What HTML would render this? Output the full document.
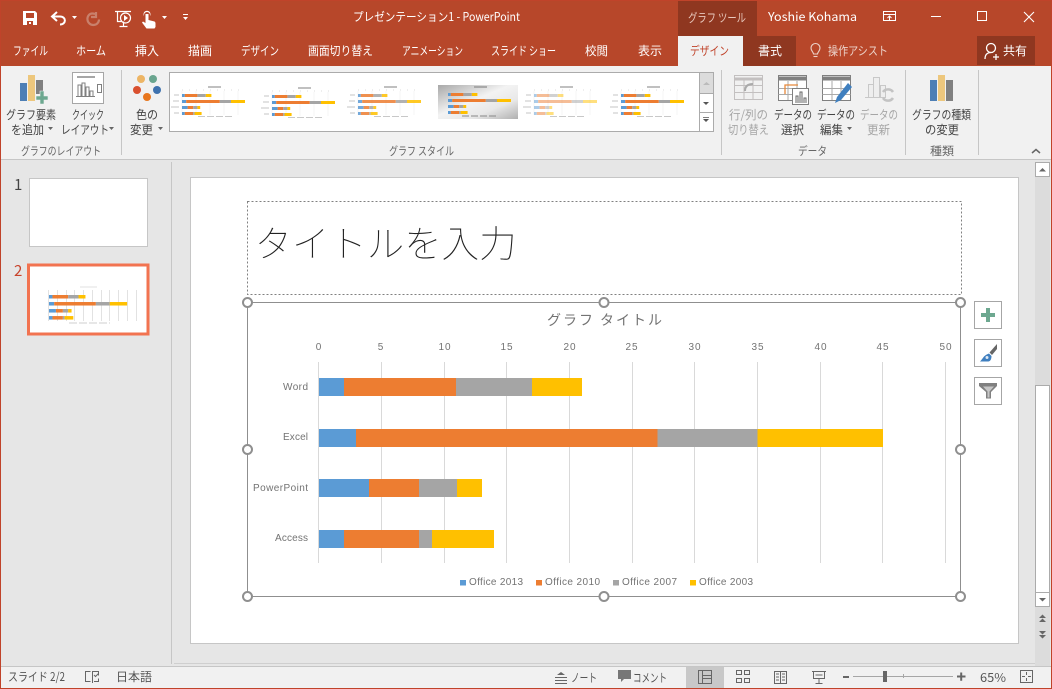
<!DOCTYPE html>
<html lang="ja"><head><meta charset="utf-8"><title>PowerPoint</title>
<style>
html,body{margin:0;padding:0;width:1052px;height:689px;overflow:hidden;background:#e6e6e6}
svg{display:block;position:absolute;left:0;top:0}
text{font-family:"Liberation Sans","Noto Sans CJK JP",sans-serif;white-space:pre}
.j{font-family:"Noto Sans CJK JP","Liberation Sans",sans-serif;font-size:12px}
.w{fill:#fff}.k{fill:#444}.d{fill:#a6a6a6}.g{fill:#666;font-size:11.5px}
.a{font-family:"Liberation Sans",sans-serif;font-size:10px;fill:#737373}
</style></head><body>
<svg width="1052" height="689" viewBox="0 0 1052 689" xmlns="http://www.w3.org/2000/svg">
<defs>
<g id="bars">
<rect x="0" y="0" width="2.8" height="3" fill="#5b9bd5"/><rect x="2.8" y="0" width="12.6" height="3" fill="#ed7d31"/><rect x="15.4" y="0" width="8.4" height="3" fill="#a5a5a5"/><rect x="23.8" y="0" width="5.6" height="3" fill="#ffc000"/>
<rect x="0" y="6" width="4.2" height="3" fill="#5b9bd5"/><rect x="4.2" y="6" width="33.6" height="3" fill="#ed7d31"/><rect x="37.8" y="6" width="11.2" height="3" fill="#a5a5a5"/><rect x="49" y="6" width="14" height="3" fill="#ffc000"/>
<rect x="0" y="12" width="5.6" height="3" fill="#5b9bd5"/><rect x="5.6" y="12" width="5.6" height="3" fill="#ed7d31"/><rect x="11.2" y="12" width="4.2" height="3" fill="#a5a5a5"/><rect x="15.4" y="12" width="2.8" height="3" fill="#ffc000"/>
<rect x="0" y="18" width="2.8" height="3" fill="#5b9bd5"/><rect x="2.8" y="18" width="8.4" height="3" fill="#ed7d31"/><rect x="11.2" y="18" width="1.4" height="3" fill="#a5a5a5"/><rect x="12.6" y="18" width="7" height="3" fill="#ffc000"/>
</g>
<g id="deco">
<path d="M-8 1h5M-9 7h6M-11 13h8M-8 19h5" stroke="#c4c4c4" stroke-width="1"/>
<path d="M26 -7h13" stroke="#c0c0c0" stroke-width="2"/>
<path d="M0 -4h62" stroke="#ddd" stroke-width="1" stroke-dasharray="1 6"/>
<path d="M16 22.500h34" stroke="#c8c8c8" stroke-width="1" stroke-dasharray="7 2"/>
<path d="M0 -3v24M14 -3v24M28 -3v24M42 -3v24M56 -3v24" stroke="#f4f4f4"/>
</g>
<linearGradient id="gr" x1="0" y1="0" x2="1" y2="1"><stop offset="0" stop-color="#a8a8a8"/><stop offset=".45" stop-color="#f3f3f3"/><stop offset=".7" stop-color="#e8e8e8"/><stop offset="1" stop-color="#b0b0b0"/></linearGradient>
</defs>

<!-- window -->
<rect width="1052" height="689" fill="#e6e6e6"/>
<rect width="1052" height="66" fill="#b7472a"/>
<rect x="0" y="66" width="1052" height="93" fill="#f1f1f1"/>
<rect x="0" y="159" width="1052" height="1" fill="#c6c6c6"/>
<rect x="0" y="667" width="1052" height="21" fill="#f1f1f1"/>
<rect x="0" y="666" width="1052" height="1" fill="#c6c6c6"/>
<rect x="174" y="663" width="861" height="1" fill="#cfcfcf"/>
<rect x="171" y="162" width="1" height="502" fill="#c6c6c6"/>

<!-- tabs -->
<rect x="678" y="1" width="79" height="35" fill="#8f3720"/>
<rect x="678" y="36" width="65" height="30" fill="#f1f1f1"/>
<rect x="743" y="36" width="53" height="30" fill="#8f3720"/>
<rect x="977" y="36" width="58" height="29" fill="#8f3720"/>

<!-- QAT -->
<path d="M23 11h12l2 2v12H23z M26 13v5h8v-5z M27 25h6v-4h-6z" fill="#fff" fill-rule="evenodd"/>
<rect x="29" y="22" width="2" height="2" fill="#fff"/>
<path d="M57 12l-5 4.500 5 4.500M53 16.500h7c6.500 0 6.500 8 0 8" fill="none" stroke="#fff" stroke-width="2"/>
<path d="M96 12v5h-5M95 14c-6-2-8 3-7.500 6 .5 3 3 5 6 5 3.500 0 5.500-3 5.500-5.500" fill="none" stroke="#c9806b" stroke-width="2.200"/>
<g fill="none" stroke="#fff" stroke-width="1.200">
<path d="M115 11.500h16M117.500 12v9.500h4M123.500 21.500v5M119.500 26.500h8"/><circle cx="125.500" cy="18" r="5"/>
</g>
<path d="M124 15l4 3-4 3z" fill="#fff"/>
<path d="M144 16a3.500 3.500 0 1 1 6 0v-1a2.600 2.600 0 1 0-6 0zM145.500 14h3v6l6 1.500c1 .5 1 1.500 1 2.500v3l-1 1.500h-8l-4.500-6 1-1 2.500 1.500z" fill="#fff"/>
<path d="M72 16h5l-2.500 3zM162 16h5l-2.500 3zM183 17h5l-2.500 3z" fill="#fff"/><rect x="183" y="14" width="5" height="1" fill="#fff"/>

<!-- title bar text -->
<text x="353" y="21" class="j w" textLength="167" lengthAdjust="spacingAndGlyphs">プレゼンテーション1 - PowerPoint</text>
<text x="688" y="22" class="j" fill="#e8c8bd" textLength="58" lengthAdjust="spacingAndGlyphs">グラフ ツール</text>
<text x="768" y="21" class="j w" textLength="89" lengthAdjust="spacingAndGlyphs">Yoshie Kohama</text>
<g fill="none" stroke="#fff"><path d="M883.500 11.500h12v9h-12zM883.500 14.500h12M889.500 20v-4M887.500 18l2-2 2 2"/><path d="M931 16.500h10"/><rect x="977.500" y="11.500" width="9" height="9"/><path d="M1024 12l10 10M1034 12l-10 10" stroke-width="1.100"/></g>

<!-- menu tabs -->
<text x="13" y="55" class="j w" textLength="35" lengthAdjust="spacingAndGlyphs">ファイル</text>
<text x="76" y="55" class="j w" textLength="30" lengthAdjust="spacingAndGlyphs">ホーム</text>
<text x="135" y="55" class="j w" textLength="24" lengthAdjust="spacingAndGlyphs">挿入</text>
<text x="188" y="55" class="j w" textLength="24" lengthAdjust="spacingAndGlyphs">描画</text>
<text x="241" y="55" class="j w" textLength="38" lengthAdjust="spacingAndGlyphs">デザイン</text>
<text x="308" y="55" class="j w" textLength="65" lengthAdjust="spacingAndGlyphs">画面切り替え</text>
<text x="402" y="55" class="j w" textLength="61" lengthAdjust="spacingAndGlyphs">アニメーション</text>
<text x="491" y="55" class="j w" textLength="65" lengthAdjust="spacingAndGlyphs">スライド ショー</text>
<text x="585" y="55" class="j w" textLength="23" lengthAdjust="spacingAndGlyphs">校閲</text>
<text x="638" y="55" class="j w" textLength="24" lengthAdjust="spacingAndGlyphs">表示</text>
<text x="690" y="55" class="j" fill="#c0432a" textLength="39" lengthAdjust="spacingAndGlyphs">デザイン</text>
<text x="758" y="55" class="j w" textLength="24" lengthAdjust="spacingAndGlyphs">書式</text>
<text x="828" y="55" class="j" fill="#ecd3ca" textLength="60" lengthAdjust="spacingAndGlyphs">操作アシスト</text>
<text x="1003" y="55" class="j w" textLength="24" lengthAdjust="spacingAndGlyphs">共有</text>
<g fill="none" stroke="#ecd3ca" stroke-width="1.100"><path d="M813.500 54c0-2-2.500-3-2.500-6a4.500 4.500 0 0 1 9 0c0 3-2.500 4-2.500 6z"/><path d="M813.500 56.500h4"/></g>
<g fill="none" stroke="#fff" stroke-width="1.300"><circle cx="991" cy="48" r="4.500"/><path d="M985 59c0-5 3-6.500 6-6.500"/><path d="M993 57h6M996 54v6"/></g>

<!-- ribbon separators -->
<g fill="#c6c6c6"><rect x="121" y="70" width="1" height="85"/><rect x="721" y="70" width="1" height="85"/><rect x="905" y="70" width="1" height="85"/><rect x="978" y="70" width="1" height="85"/></g>

<!-- chart element icon -->
<rect x="20" y="83" width="7" height="18" fill="#4e7fb5"/><rect x="28" y="75" width="7" height="26" fill="#edc77d"/><rect x="36" y="80" width="7" height="14" fill="#808080"/>
<path d="M40 91h4v5h4v4h-4v4h-4v-4h-4v-4h4z" fill="#6da890" stroke="#f1f1f1" stroke-width=".6"/>
<!-- quick layout -->
<rect x="72.500" y="72.500" width="31" height="31" fill="#fff" stroke="#a6a6a6"/>
<path d="M77 77h18" stroke="#a6a6a6" stroke-width="2"/>
<path d="M78 96V85h3v11M82 96V83h3v13M86 96V87h3v9M90 96v-5h3v5M76 96.500h19" fill="none" stroke="#808080"/>
<rect x="97.500" y="84.500" width="4" height="8" fill="none" stroke="#808080"/>
<!-- colors -->
<circle cx="141" cy="79" r="4" fill="#edb565"/><circle cx="153" cy="79" r="4" fill="#6aa58f"/><circle cx="137" cy="90" r="4" fill="#d9502f"/><circle cx="157" cy="90" r="4" fill="#3f72ae"/><circle cx="147" cy="97" r="4" fill="#e8761e"/>

<text x="6" y="119" class="j k" textLength="50" lengthAdjust="spacingAndGlyphs">グラフ要素</text>
<text x="11" y="134" class="j k" textLength="33" lengthAdjust="spacingAndGlyphs">を追加</text>
<text x="72" y="119" class="j k" textLength="32" lengthAdjust="spacingAndGlyphs">クイック</text>
<text x="61" y="134" class="j k" textLength="48" lengthAdjust="spacingAndGlyphs">レイアウト</text>
<text x="136" y="119" class="j k" textLength="22" lengthAdjust="spacingAndGlyphs">色の</text>
<text x="130" y="134" class="j k" textLength="23" lengthAdjust="spacingAndGlyphs">変更</text>
<text x="729" y="119" class="j d" textLength="39" lengthAdjust="spacingAndGlyphs">行/列の</text>
<text x="728" y="134" class="j d" textLength="41" lengthAdjust="spacingAndGlyphs">切り替え</text>
<text x="774" y="119" class="j k" textLength="38" lengthAdjust="spacingAndGlyphs">データの</text>
<text x="781" y="134" class="j k" textLength="23" lengthAdjust="spacingAndGlyphs">選択</text>
<text x="817" y="119" class="j k" textLength="38" lengthAdjust="spacingAndGlyphs">データの</text>
<text x="820" y="134" class="j k" textLength="23" lengthAdjust="spacingAndGlyphs">編集</text>
<text x="860" y="119" class="j d" textLength="38" lengthAdjust="spacingAndGlyphs">データの</text>
<text x="867" y="134" class="j d" textLength="23" lengthAdjust="spacingAndGlyphs">更新</text>
<text x="912" y="119" class="j k" textLength="59" lengthAdjust="spacingAndGlyphs">グラフの種類</text>
<text x="925" y="134" class="j k" textLength="34" lengthAdjust="spacingAndGlyphs">の変更</text>
<path d="M48 127h5l-2.500 3zM109 127h5l-2.500 3zM158 127h5l-2.500 3zM847 127h5l-2.500 3z" fill="#666"/>
<text x="21" y="155" class="j g" textLength="80" lengthAdjust="spacingAndGlyphs">グラフのレイアウト</text>
<text x="389" y="155" class="j g" textLength="65" lengthAdjust="spacingAndGlyphs">グラフ スタイル</text>
<text x="798" y="155" class="j g" textLength="29" lengthAdjust="spacingAndGlyphs">データ</text>
<text x="930" y="155" class="j g" textLength="24" lengthAdjust="spacingAndGlyphs">種類</text>
<path d="M1032 153l4-3.500 4 3.500" fill="none" stroke="#666" stroke-width="1.500"/>

<!-- gallery -->
<rect x="169.500" y="72.500" width="544" height="59" fill="#fff" stroke="#ababab"/>
<rect x="699" y="73" width="14" height="21" fill="#dcdcdc"/>
<path d="M699.500 73v58M699.500 93.500h14M699.500 112.500h14" stroke="#ababab" fill="none"/>
<path d="M703 85l3.500-3 3.500 3z" fill="#bbb"/><path d="M703 102h6l-3 3z" fill="#555"/><path d="M703 119h6l-3 3zM703 117h6v.8h-6z" fill="#555"/>
<!-- thumb 1 -->
<use href="#deco" x="182" y="94"/><use href="#bars" x="182" y="94"/>
<!-- thumb 2 -->
<use href="#deco" x="272" y="95"/><use href="#bars" x="272" y="95"/>
<!-- thumb 3 -->
<use href="#deco" x="358" y="94"/><use href="#bars" x="358" y="94" opacity=".85"/>
<!-- thumb 4 -->
<rect x="438" y="85" width="80" height="34" fill="url(#gr)"/>
<use href="#bars" x="448" y="93"/>
<path d="M474 87h13" stroke="#999" stroke-width="1.500"/><path d="M462 116h34" stroke="#888" stroke-dasharray="7 2"/>
<!-- thumb 5 -->
<use href="#deco" x="534" y="94"/><use href="#bars" x="534" y="94" opacity=".5"/>
<!-- thumb 6 -->
<use href="#deco" x="621" y="94"/><use href="#bars" x="621" y="94"/>

<!-- data icons -->
<g fill="none" stroke="#c3c0c0">
<rect x="734.500" y="75.500" width="28" height="24" fill="#f1f1f1"/><path d="M734 79h29" stroke-width="3"/><path d="M734.500 85.500h28M734.500 92.500h28M744 80v19M753 80v19"/>
<path d="M745 91c0-5 3-7 8-7" stroke="#aaa" stroke-width="2"/>
</g>
<g fill="none" stroke="#808080">
<rect x="778.500" y="75.500" width="28" height="25" fill="#fff"/><path d="M778 78.500h29" stroke-width="4"/><path d="M778.500 88.500h28M778.500 94.500h28M788 81v19M797 81v19" stroke="#aaa"/>
<path d="M785 94v-9h13" stroke="#e8893a" stroke-width="1.300"/>
<rect x="792.500" y="88.500" width="16" height="16" fill="#fff"/><path d="M796 103v-7h2v7M800 103V92h2v11M804 103v-5h2v5" stroke="#666"/>
<rect x="822.500" y="75.500" width="28" height="25" fill="#fff"/><path d="M822 78.500h29" stroke-width="4"/><path d="M822.500 88.500h28M822.500 94.500h28M832 81v19M841 81v19" stroke="#aaa"/>
</g>
<path d="M848 83l4 4-11 13-6 3 2-6z" fill="#3f7fbf"/>
<g fill="none" stroke="#c8c8c8"><rect x="868.500" y="84.500" width="5" height="13" fill="#eee"/><rect x="873.500" y="77.500" width="6" height="20" fill="#eee"/><rect x="880.500" y="85.500" width="5" height="12" fill="#eee"/><path d="M865 97.500h20"/></g>
<path d="M883 92a6 6 0 0 1 10 0M893 98a6 6 0 0 1-10 0" fill="none" stroke="#c3c3c3" stroke-width="2.500"/>
<rect x="930" y="80" width="7" height="21" fill="#4e7fb5"/><rect x="938" y="75" width="7" height="26" fill="#edc77d"/><rect x="946" y="80" width="7" height="21" fill="#808080"/>

<!-- left pane -->
<text x="14" y="190" class="j" style="font-size:15px" fill="#444">1</text>
<rect x="29.500" y="178.500" width="118" height="68" fill="#fff" stroke="#c6c6c6"/>
<text x="14" y="276" class="j" style="font-size:15px" fill="#c8432b">2</text>
<rect x="28.500" y="265" width="119.500" height="69" fill="#fff" stroke="#f27350" stroke-width="3"/>
<g stroke="#e2e2e2"><path d="M48.500 290v31M57.500 290v31M66.500 290v31M74.500 290v31M83.500 290v31M92.500 290v31M101.500 290v31M109.500 290v31M118.500 290v31M127.500 290v31M136.500 290v31"/></g>
<g transform="translate(49 295) scale(1.240 1.170)"><use href="#bars"/></g>
<path d="M80 287h17" stroke="#e0e0e0"/><path d="M69 323h41" stroke="#cfcfcf" stroke-dasharray="8 2"/>

<!-- slide -->
<rect x="190.500" y="177.500" width="828" height="466" fill="#fff" stroke="#c6c6c6"/>
<rect x="247.500" y="201.500" width="714" height="93" fill="none" stroke="#808080" stroke-dasharray="2 2"/>
<text x="254.500" y="257" style="font-family:'Noto Sans CJK JP',sans-serif;font-size:37px;font-weight:100" fill="#222" textLength="262" lengthAdjust="spacingAndGlyphs">タイトルを入力</text>

<!-- chart -->
<rect x="247.500" y="302.500" width="713" height="294" fill="#fff" stroke="#8f8f8f"/>
<text x="547" y="325" class="j" style="font-size:14px" fill="#737373" textLength="115">グラフ タイトル</text>
<g stroke="#d9d9d9"><path d="M318.500 362v201M381.500 362v201M444.500 362v201M506.500 362v201M569.500 362v201M632.500 362v201M694.500 362v201M757.500 362v201M820.500 362v201M882.500 362v201M945.500 362v201"/></g>
<g text-anchor="middle" letter-spacing="1">
<text x="319" y="350" class="a">0</text><text x="381" y="350" class="a">5</text><text x="445" y="350" class="a">10</text><text x="507" y="350" class="a">15</text><text x="570" y="350" class="a">20</text><text x="632" y="350" class="a">25</text><text x="695" y="350" class="a">30</text><text x="758" y="350" class="a">35</text><text x="821" y="350" class="a">40</text><text x="883" y="350" class="a">45</text><text x="946" y="350" class="a">50</text>
</g>
<text x="283" y="390" class="a" textLength="25">Word</text>
<text x="283" y="440" class="a" textLength="25">Excel</text>
<text x="253" y="491" class="a" textLength="55">PowerPoint</text>
<text x="275" y="541" class="a" textLength="33">Access</text>
<g>
<rect x="319" y="378" width="25" height="18" fill="#5b9bd5"/><rect x="344" y="378" width="112" height="18" fill="#ed7d31"/><rect x="456" y="378" width="76" height="18" fill="#a5a5a5"/><rect x="532" y="378" width="50" height="18" fill="#ffc000"/>
<rect x="319" y="429" width="37" height="18" fill="#5b9bd5"/><rect x="356" y="429" width="301.500" height="18" fill="#ed7d31"/><rect x="657.500" y="429" width="100" height="18" fill="#a5a5a5"/><rect x="757.500" y="429" width="125.500" height="18" fill="#ffc000"/>
<rect x="319" y="479" width="50" height="18" fill="#5b9bd5"/><rect x="369" y="479" width="50" height="18" fill="#ed7d31"/><rect x="419" y="479" width="38" height="18" fill="#a5a5a5"/><rect x="457" y="479" width="25" height="18" fill="#ffc000"/>
<rect x="319" y="530" width="25" height="18" fill="#5b9bd5"/><rect x="344" y="530" width="75" height="18" fill="#ed7d31"/><rect x="419" y="530" width="13" height="18" fill="#a5a5a5"/><rect x="432" y="530" width="62" height="18" fill="#ffc000"/>
</g>
<rect x="460" y="580" width="6" height="5.500" fill="#5b9bd5"/><rect x="536" y="580" width="6" height="5.500" fill="#ed7d31"/><rect x="613" y="580" width="6" height="5.500" fill="#a5a5a5"/><rect x="690" y="580" width="6" height="5.500" fill="#ffc000"/>
<text x="469" y="585" class="a" textLength="54">Office 2013</text>
<text x="545" y="585" class="a" textLength="55">Office 2010</text>
<text x="622" y="585" class="a" textLength="55">Office 2007</text>
<text x="699" y="585" class="a" textLength="54">Office 2003</text>
<g fill="#fff" stroke="#8f8f8f" stroke-width="2">
<circle cx="247.500" cy="302.500" r="4.500"/><circle cx="604" cy="302.500" r="4.500"/><circle cx="960.500" cy="302.500" r="4.500"/>
<circle cx="247.500" cy="449.500" r="4.500"/><circle cx="960.500" cy="449.500" r="4.500"/>
<circle cx="247.500" cy="596.500" r="4.500"/><circle cx="604" cy="596.500" r="4.500"/><circle cx="960.500" cy="596.500" r="4.500"/>
</g>

<!-- chart side buttons -->
<g fill="#fff" stroke="#a6a6a6"><rect x="974.500" y="301.500" width="27" height="27"/><rect x="974.500" y="339.500" width="27" height="27"/><rect x="974.500" y="377.500" width="27" height="27"/></g>
<path d="M986 308h4v5h5v4h-5v5h-4v-5h-5v-4h5z" fill="#6da890"/>
<path d="M997 344v5l-5 6-2.500-2.500z" fill="#666"/><path d="M989 353.500l2.500 2.500c0 3-1 5-3 5.500h-8.500c1-1 2.500-3 4-5 1.500-1.500 3.500-2.500 5-3z" fill="#3f7fbf"/><circle cx="987" cy="357.500" r="1.500" fill="#dfe9f3"/>
<path d="M979 383h18v3l-6 6v6.500h-5V392l-7-6z" fill="#808080"/><path d="M983 386.500l4.500 5v6h2v-6l4.500-5z" fill="#fff" opacity=".55"/>

<!-- scrollbar -->
<rect x="1035" y="162" width="15" height="504" fill="#dcdcdc"/>
<rect x="1035.500" y="162.500" width="14" height="14" fill="#fff" stroke="#ababab"/>
<path d="M1039 171.500l3.500-3.500 3.500 3.500z" fill="#666"/>
<rect x="1035.500" y="385.500" width="14" height="207" fill="#fff" stroke="#ababab"/>
<rect x="1035.500" y="592.500" width="14" height="14" fill="#fff" stroke="#ababab"/>
<path d="M1039 598h7l-3.500 3.500z" fill="#666"/>
<path d="M1039 618l3.500-3.500 3.500 3.500zM1039 622l3.500-3.500 3.500 3.500zM1039 631l3.500 3.500 3.500-3.500zM1039 635l3.500 3.500 3.500-3.500z" fill="#666"/>

<!-- status bar -->
<rect x="686" y="667" width="38" height="21" fill="#c8c8c8"/>
<text x="8" y="681" class="j" fill="#555" textLength="57" lengthAdjust="spacingAndGlyphs">スライド 2/2</text>
<text x="116" y="681" class="j" fill="#555" textLength="36" lengthAdjust="spacingAndGlyphs">日本語</text>
<text x="571" y="682" class="j" fill="#555" textLength="26" lengthAdjust="spacingAndGlyphs">ノート</text>
<text x="633" y="682" class="j" fill="#555" textLength="34" lengthAdjust="spacingAndGlyphs">コメント</text>
<text x="980" y="682" class="j" fill="#555" textLength="26" lengthAdjust="spacingAndGlyphs">65%</text>
<g fill="none" stroke="#666">
<path d="M90.500 671.500h-5v10h5M92.500 671v12M92.500 671.500h6v4M94 675l1.500 1.500 3-3M94 681.500h4.500v-3"/>
<path d="M555 677.500h12M555 680.500h12M555 683.500h12"/>
<rect x="698.500" y="670.500" width="13" height="13"/><path d="M702.500 671v12M702.500 675.500h9M702.500 678.500h9"/>
<rect x="736.500" y="670.500" width="5" height="4"/><rect x="744.500" y="670.500" width="5" height="4"/><rect x="736.500" y="678.500" width="5" height="4"/><rect x="744.500" y="678.500" width="5" height="4"/>
<path d="M774.500 671.500h12v12h-12zM780.500 671.500v12M776 674h3M776 677h3M776 680h3M782 674h3M782 677h3M782 680h3"/>
<path d="M812 671.500h14M813.500 671.500v7h11v-7M815.500 675h7M819 678v5M815.500 683.500h7"/>
<rect x="1020.500" y="670.500" width="12" height="12"/><path d="M1026.500 672v3M1026.500 678v3M1022 676.500h3M1028 676.500h3"/>
</g>
<path d="M557 675l4-3 4 3z" fill="#666"/>
<path d="M618 670h13v9h-7l-3 3v-3h-3z" fill="#777"/>
<rect x="843" y="676" width="6" height="2" fill="#666"/>
<rect x="853" y="676" width="100" height="1" fill="#a6a6a6"/><rect x="903" y="674" width="1" height="4" fill="#a6a6a6"/>
<rect x="883" y="671" width="4" height="11" fill="#666"/>
<path d="M957 675.500h3.200v-3h2v3h3.300v2h-3.300v3.200h-2v-3.200H957z" fill="#666"/>

<!-- window border -->
<rect x=".5" y=".5" width="1051" height="688" fill="none" stroke="#c0432a"/>
</svg>
</body></html>
